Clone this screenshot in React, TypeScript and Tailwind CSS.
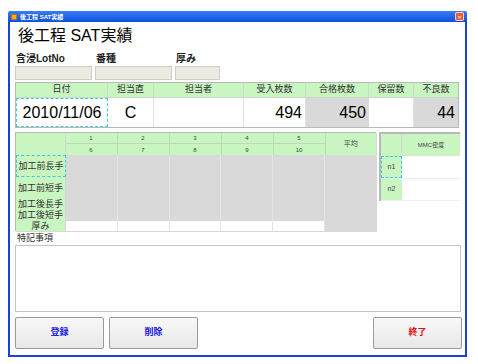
import React from "react"

const jp = { fontFamily: '"Liberation Sans", "Noto Sans CJK JP", sans-serif' }

const green = "bg-[#c8f5c0]"

function Header({ label, className = "" }: { label: string; className?: string }) {
  return (
    <div className={`${green} flex items-center justify-center border-r border-[#d0d8d0] text-[9px] text-[#333] ${className}`}>
      {label}
    </div>
  )
}

export default function App() {
  const cols = ["1", "2", "3", "4", "5"]
  const cols2 = ["6", "7", "8", "9", "10"]
  const rows = [
    { label: "加工前長手", h: "h-[22px]", focus: true },
    { label: "加工前短手", h: "h-[22px]" },
    { label: "加工後長手", h: "h-[11px]" },
    { label: "加工後短手", h: "h-[11px]" },
  ]

  return (
    <div className="w-[478px] h-[364px] bg-white overflow-hidden" style={jp}>
      <div className="ml-[8px] mt-[11px] w-[459px]">
        {/* title bar */}
        <div className="h-[11px] flex items-center bg-gradient-to-b from-[#3b7cf0] to-[#0a4fe0] rounded-t-[2px] px-[3px]">
          <div className="w-[6px] h-[6px] bg-[#f0b020] border border-[#c07010]" />
          <span className="ml-[3px] text-[6px] leading-none text-white font-bold">後工程 SAT実績</span>
          <div className="ml-auto w-[9px] h-[9px] rounded-[2px] bg-[#e06040] border border-white/70 flex items-center justify-center text-[6px] text-white leading-none">×</div>
        </div>

        {/* body */}
        <div className="h-[335px] border-x-2 border-b-2 border-[#1c40d8] pl-[5px] pr-[5px]">
          <div className="pt-[4px] pl-[3px] text-[16px] leading-[20px] text-black">後工程 SAT実績</div>

          {/* lot fields */}
          <div className="mt-[7px] flex gap-[3px]">
            <div className="flex flex-col">
              <span className="pl-[1px] text-[10px] leading-[12px] font-bold text-[#222]">含浸LotNo</span>
              <div className="mt-[1px] w-[77px] h-[14px] bg-[#ecebe2] border border-[#cfcdc4]" />
            </div>
            <div className="flex flex-col">
              <span className="pl-[1px] text-[10px] leading-[12px] font-bold text-[#222]">番種</span>
              <div className="mt-[1px] w-[77px] h-[14px] bg-[#ecebe2] border border-[#cfcdc4]" />
            </div>
            <div className="flex flex-col">
              <span className="pl-[1px] text-[10px] leading-[12px] font-bold text-[#222]">厚み</span>
              <div className="mt-[1px] w-[45px] h-[14px] bg-[#ecebe2] border border-[#cfcdc4]" />
            </div>
          </div>

          {/* main figures */}
          <div className="mt-[2px] w-[444px] border border-[#b8b8b8]">
            <div className="grid grid-cols-[92px_46px_90px_62px_63px_45px_44px] h-[15px] border-b border-[#c8d8c8]">
              <Header label="日付" />
              <Header label="担当直" />
              <Header label="担当者" />
              <Header label="受入枚数" />
              <Header label="合格枚数" />
              <Header label="保留数" />
              <Header label="不良数" className="border-r-0" />
            </div>
            <div className="grid grid-cols-[92px_46px_90px_62px_63px_45px_44px] h-[29px] text-[16px] text-black">
              <div className="flex items-center justify-center border border-dashed border-[#40c8d8]">2010/11/06</div>
              <div className="flex items-center justify-center border-r border-[#e0e0e0]">C</div>
              <div className="border-r border-[#e0e0e0]" />
              <div className="flex items-center justify-end pr-[3px] border-r border-[#e0e0e0]">494</div>
              <div className="flex items-center justify-end pr-[3px] bg-[#d9d9d9]">450</div>
              <div className="border-r border-[#e0e0e0]" />
              <div className="flex items-center justify-end pr-[3px] bg-[#d9d9d9]">44</div>
            </div>
          </div>

          {/* measurement grids */}
          <div className="mt-[4px] flex items-start">
            <div className="w-[361px] border-l border-t border-[#b8b8b8] shadow-[1px_1px_0_#d8d8d8]">
              <div className="flex">
                <div className={`${green} w-[50px] h-[22px] border-r border-[#d0d8d0]`} />
                <div className="flex flex-col">
                  <div className="flex h-[11px]">
                    {cols.map(c => (
                      <div key={c} className={`${green} w-[52px] flex items-center justify-center border-r border-b border-[#b8dcb8] text-[6px] leading-none text-[#444]`}>{c}</div>
                    ))}
                  </div>
                  <div className="flex h-[11px]">
                    {cols2.map(c => (
                      <div key={c} className={`${green} w-[52px] flex items-center justify-center border-r border-[#b8dcb8] text-[6px] leading-none text-[#444]`}>{c}</div>
                    ))}
                  </div>
                </div>
                <div className={`${green} w-[51px] h-[22px] flex items-center justify-center text-[7px] text-[#444]`}>平均</div>
              </div>
              {rows.map(r => (
                <div key={r.label} className={`flex ${r.h}`}>
                  <div className={`${green} w-[50px] flex items-center justify-center text-[9px] leading-none text-[#333] ${r.focus ? "border border-dashed border-[#40c8d8]" : "border-r border-[#d0d8d0]"}`}>{r.label}</div>
                  {cols.map(c => (
                    <div key={c} className="w-[52px] bg-[#d9d9d9] border-r border-[#e4e4e4]" />
                  ))}
                  <div className="w-[51px] bg-[#d9d9d9]" />
                </div>
              ))}
              <div className="flex h-[10px]">
                <div className={`${green} w-[50px] flex items-center justify-center text-[9px] leading-none text-[#333] border-r border-[#d0d8d0]`}>厚み</div>
                {cols.map(c => (
                  <div key={c} className="w-[52px] bg-white border-r border-[#e4e4e4]" />
                ))}
                <div className="w-[51px] bg-[#d9d9d9]" />
              </div>
            </div>

            <div className="ml-[3px] w-[81px] border-l-2 border-t-2 border-[#b8b8b8]">
              <div className="flex h-[22px]">
                <div className={`${green} w-[21px] border-r border-[#d0d8d0]`} />
                <div className={`${green} flex-1 flex items-center justify-center text-[6px] text-[#444]`}>MMC密度</div>
              </div>
              <div className="flex h-[23px] border-b border-[#eeeeee]">
                <div className={`${green} w-[21px] flex items-center justify-center text-[7px] text-[#444] border border-dashed border-[#40c8d8]`}>n1</div>
                <div className="flex-1 bg-white" />
              </div>
              <div className="flex h-[22px] border-b border-[#eeeeee]">
                <div className={`${green} w-[21px] flex items-center justify-center text-[7px] text-[#444]`}>n2</div>
                <div className="flex-1 bg-white" />
              </div>
            </div>
          </div>

          {/* remarks */}
          <div className="mt-[2px] pl-[2px] text-[9px] leading-[11px] text-[#333]">特記事項</div>
          <div className="mt-[1px] w-[446px] h-[67px] border border-[#c4c4c4] bg-white" />

          {/* buttons */}
          <div className="mt-[5px] flex gap-[5px] w-[447px]">
            <button className="w-[89px] h-[32px] rounded-[2px] border border-[#9a9a9a] bg-gradient-to-b from-[#f8f8f8] to-[#e8e8e8] text-[9px] font-bold text-[#2020e0]">登録</button>
            <button className="w-[89px] h-[32px] rounded-[2px] border border-[#9a9a9a] bg-gradient-to-b from-[#f8f8f8] to-[#e8e8e8] text-[9px] font-bold text-[#2020e0]">削除</button>
            <button className="ml-auto w-[89px] h-[32px] rounded-[2px] border border-[#9a9a9a] bg-gradient-to-b from-[#f8f8f8] to-[#e8e8e8] text-[9px] font-bold text-[#e01010]">終了</button>
          </div>
        </div>
      </div>
    </div>
  )
}
